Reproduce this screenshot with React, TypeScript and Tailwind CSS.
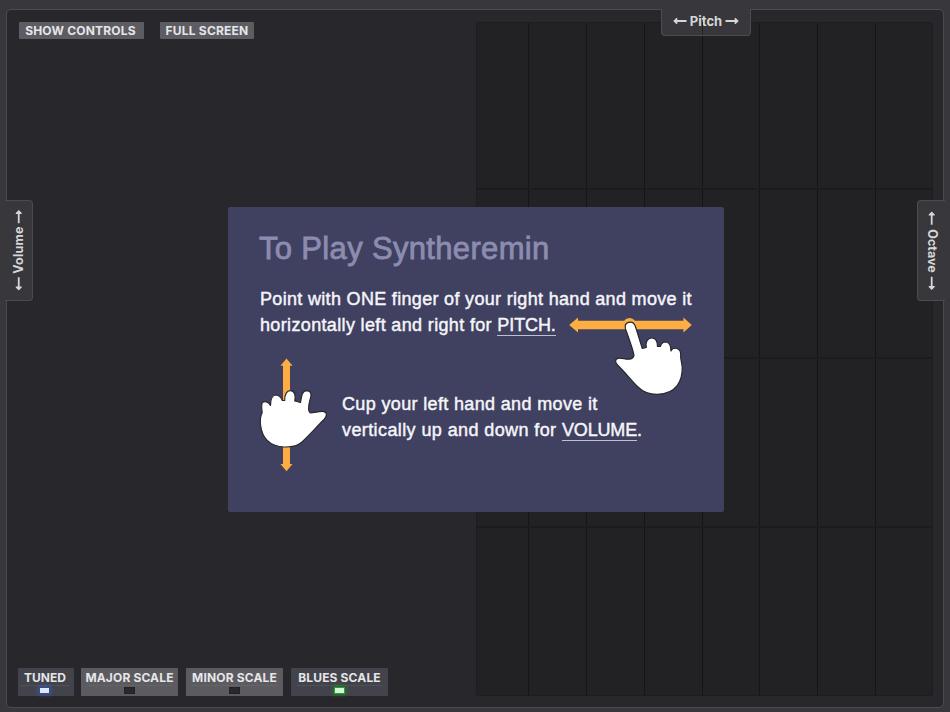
import React from "react";

const UI = "font-['Inter','Noto_Sans',sans-serif] font-bold";
const HELV = "font-['Liberation_Sans',Arial,sans-serif]";

function Arrow({ className = "" }: { className?: string }) {
  return (
    <svg viewBox="0 0 14 8" className={`h-2 w-3.5 shrink-0 ${className}`} aria-hidden="true">
      <path d="M13.500 3.100v1.800H4.300V7H3.300L.2 4 3.300 1h1v2.100z" fill="#d6d6d8" />
    </svg>
  );
}

function TopButton({ children, className }: { children: React.ReactNode; className: string }) {
  return (
    <button className={`${UI} flex h-[17px] items-center justify-center whitespace-nowrap rounded-[1px] bg-[#5c5c62] text-[12px] leading-[17px] text-[#e6e6e8] ${className}`}>
      {children}
    </button>
  );
}

const leds = {
  blue: "-ml-0.5 border-[#2b4f9c] bg-[#dfe7f8] shadow-[0_0_4px_1px_#3c68cc80]",
  green: "border-[#1fa52c] bg-[#d4f5d2] shadow-[0_0_4px_1px_#1f9a2b80]",
  off: "border-[#222224] bg-[#29292c]",
};

function ScaleButton({ label, led, className }: { label: string; led: keyof typeof leds; className: string }) {
  const off = led === "off";
  return (
    <button className={`${UI} flex h-7 flex-col items-center whitespace-nowrap rounded-[1px] text-[12px] leading-[19px] text-[#e6e6e8] ${off ? "bg-[#5b5b60]" : "bg-[#43434b]"} ${className}`}>
      <span className="h-[17px]">{label}</span>
      <span className={`h-px w-[88%] ${off ? "bg-[#636368]" : "bg-[#505058]"}`} />
      <span className={`mt-px h-[7px] w-[11px] border ${leds[led]}`} />
    </button>
  );
}

const columns = [52, 58, 58, 58, 57, 58, 58, 57];
const rows = [167, 169, 169, 169];

function PitchGrid() {
  return (
    <div className="mr-[10px] mt-3 flex h-[674px] w-[457px] flex-col overflow-hidden rounded-[2px] border border-[#1d1d1f] bg-[#222224]">
      {rows.map((h, r) => (
        <div key={r} className={`flex shrink-0 ${r < 3 ? "border-b-2 border-[#1c1c1d]" : ""}`} style={{ height: h }}>
          {columns.map((w, c) => (
            <div key={c} className={`h-full shrink-0 ${c < 7 ? "border-r border-[#151516]" : ""}`} style={{ width: w }} />
          ))}
        </div>
      ))}
    </div>
  );
}

function PointingHand() {
  return (
    <svg width="126" height="80" viewBox="567 316 126 80" aria-hidden="true">
      <path d="M569.2 325l8.800-7.500v3.200h105.400v-3.200l8.400 7.500-8.400 7.500v-3.200H578v3.200z" fill="#fcae42" />
      <circle cx="629.5" cy="324.3" r="6.3" fill="#fcae42" />
      <path d="M634 355.500C633 349 628 336 625.500 329C623.500 322 632.500 319.500 635.300 326L642.300 348.500L646.300 347.500C645 342.500 647.500 338 651.500 338C655.500 338 657.500 341.500 657.500 346.500L660.500 346.500C661 343.500 663.500 342 666 342C669.500 342.500 671 345.500 671 351C672 348.500 675 348 677 348.500C680 349.500 681 352 680.700 356C680.300 359 682 363 682.200 367C682.600 380 677 394 657.500 394.300C649 394.500 642.500 391.500 638 387C632 381 625.500 373 618.500 366C614.500 362.500 614.500 358.500 619 358.200C624 358 632 362 634 355.500Z" fill="#fff" stroke="#29272d" strokeWidth="1.2" strokeLinejoin="round" />
    </svg>
  );
}

function CuppedHand() {
  return (
    <svg width="70" height="116" viewBox="258 357 70 116" aria-hidden="true">
      <path d="M286.500 358.500l6 7.300H290V464h2.500l-6 7.300-6-7.300h2.500V365.800h-2.500z" fill="#fcae42" />
      <path d="M262.200 412.500C261.700 409 261.300 405 262.200 403C264 400.500 269 401.500 270.500 405.500C270.500 398 272 395 276.200 395C280 395.300 281.500 398.500 282.300 400.500L284.700 400.500C284.500 394 287 390.500 290.500 390.700C294.500 390.700 296 395.500 294.800 401L300.500 402.500C301.500 397.500 301.500 391 306.500 390.700C312 391 311.500 395.500 310.200 399C308.500 405 307.500 411.500 310.500 413C315 412.800 320 410.800 324 411.600C327.500 412.700 327 416 324 419.500C316 427.500 310 434.500 302 442C297 446.500 291 447.200 284.500 447C270 446.500 262 439 260.400 424C260 419 260.700 415.500 262.200 412.500Z" fill="#fff" stroke="#29272d" strokeWidth="1.2" strokeLinejoin="round" />
    </svg>
  );
}

function Instructions() {
  return (
    <section className={`${HELV} absolute left-[228px] top-[207px] h-[305px] w-[496px] rounded-[2px] bg-[#404060] pl-8 pt-[22px] text-[#f5f5fa]`}>
      <h1 className="-ml-px whitespace-nowrap text-[31px] leading-10 tracking-[0.33px] text-[#8c8cb0] [-webkit-text-stroke:0.8px_#8c8cb0]">To Play Syntheremin</h1>
      <div className="mt-[17px] whitespace-nowrap text-[18px] leading-[26px] [-webkit-text-stroke:0.45px_#f5f5fa]">
        <p className="tracking-[0.32px]">Point with ONE finger of your right hand and move it</p>
        <div className="flex h-[26px] items-start">
          <p className="w-[307px] tracking-[0.35px]">horizontally left and right for <span className="inline-block border-b border-[#bfbfd0] leading-[19px] tracking-[-0.1px]">PITCH.</span></p>
          <div className="mt-1 shrink-0"><PointingHand /></div>
        </div>
        <div className="-ml-0.5 mt-[19px] flex">
          <CuppedHand />
          <div className="ml-3.5 mt-[34px]">
            <p className="tracking-[0.35px]">Cup your left hand and move it</p>
            <p className="tracking-[0.4px]">vertically up and down for <span className="inline-block border-b border-[#bfbfd0] leading-[19px] tracking-[-0.15px]">VOLUME</span>.</p>
          </div>
        </div>
      </div>
    </section>
  );
}

export default function App() {
  return (
    <main className="relative h-[712px] w-[950px] overflow-hidden bg-[#38373c] px-1.5 pb-1 pt-[9px]">
      <div className="flex h-[699px] w-[938px] justify-between rounded-[5px] border border-[#4c4b50] bg-[#28272c]">
        <div className="flex flex-col justify-between pb-[11px] pl-[11px] pt-3">
          <div className="flex gap-4 pl-px">
            <TopButton className="w-[125px] pr-0.5 tracking-[0.2px]">SHOW CONTROLS</TopButton>
            <TopButton className="w-[94px] tracking-[0.2px]">FULL SCREEN</TopButton>
          </div>
          <div className="flex">
            <ScaleButton label="TUNED" led="blue" className="mr-[7px] w-14 pr-0.5" />
            <ScaleButton label="MAJOR SCALE" led="off" className="mr-2 w-[97px] tracking-[0.15px]" />
            <ScaleButton label="MINOR SCALE" led="off" className="mr-2 w-[97px] tracking-[0.15px]" />
            <ScaleButton label="BLUES SCALE" led="green" className="w-[97px] tracking-[0.15px]" />
          </div>
        </div>
        <PitchGrid />
      </div>

      <div className={`${UI} absolute left-[661px] top-[9px] flex h-[27px] w-[90px] items-center justify-center gap-[3px] rounded-b-[4px] border border-t-0 border-[#4c4b50] bg-[#38373c] pb-[3px] text-[13px] leading-5 text-[#d6d6d8]`}>
        <Arrow />
        <span>Pitch</span>
        <Arrow className="rotate-180" />
        <span className="absolute bottom-0 left-10 h-[13px] w-px bg-[#242427]" />
      </div>
      <div className={`${UI} absolute left-[5px] top-[200px] flex h-[101px] w-7 items-center justify-center rounded-r-[4px] border border-l-0 border-[#4c4b50] bg-[#38373c] pb-0.5 text-[12.5px] leading-5 text-[#d6d6d8]`}>
        <div className="flex -rotate-90 items-center gap-[3px] tracking-[0.2px]">
          <Arrow />
          <span>Volume</span>
          <Arrow className="rotate-180" />
        </div>
      </div>
      <div className={`${UI} absolute left-[917px] top-[200px] flex h-[101px] w-7 items-center justify-center rounded-l-[4px] border border-r-0 border-[#4c4b50] bg-[#38373c] text-[12.5px] leading-5 text-[#d6d6d8]`}>
        <div className="flex rotate-90 items-center gap-1">
          <Arrow />
          <span>Octave</span>
          <Arrow className="rotate-180" />
        </div>
      </div>

      <Instructions />
    </main>
  );
}
